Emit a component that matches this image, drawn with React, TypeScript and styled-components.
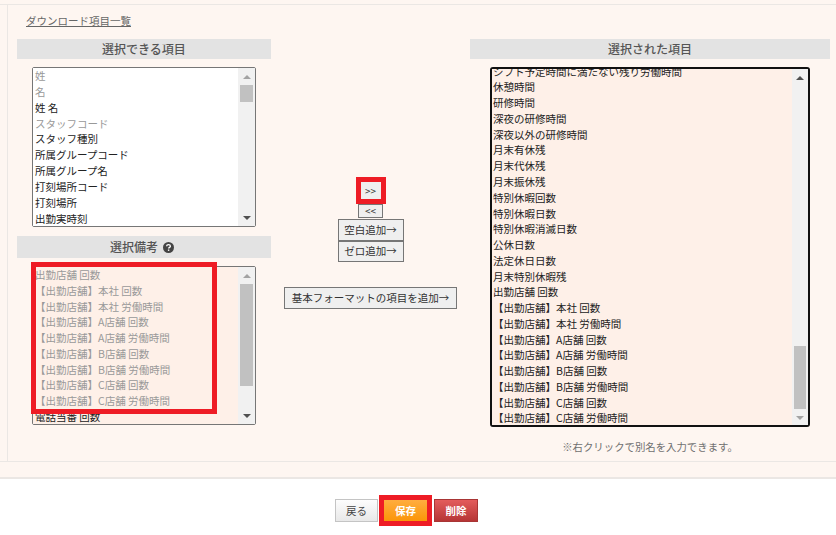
import React from "react";
import styled, { createGlobalStyle } from "styled-components";

const Global = createGlobalStyle`
  html, body { margin: 0; padding: 0; background: #fff; }
  body { font-family: "Noto Sans CJK JP", "Liberation Sans", sans-serif; width: 836px; height: 535px; overflow: hidden; }
`;

const Page = styled.div`
  width: 836px;
  height: 535px;
  display: flex;
  flex-direction: column;
`;
const Peach = styled.div`
  height: 479px;
  box-sizing: border-box;
  padding-top: 4px;
  background: #fef6f1;
  border-bottom: 2px solid #ebe7e4;
`;
const Panel = styled.section`
  height: 458px;
  box-sizing: border-box;
  border-top: 1px solid #ebe7e4;
  border-bottom: 1px solid #ebe7e4;
`;
const PanelInner = styled.div`
  height: 100%;
  box-sizing: border-box;
  margin-left: 7px;
  border-left: 1px solid #ebe7e4;
  padding: 7px 6px 0 9px;
`;
const TopLink = styled.a`
  display: block;
  margin-left: 9px;
  height: 18px;
  line-height: 18px;
  font-size: 10.5px;
  color: #666;
  text-decoration: underline;
`;
const Columns = styled.div`
  display: flex;
  margin-top: 9px;
`;
const LeftCol = styled.div`
  width: 254px;
  display: flex;
  flex-direction: column;
`;
const CenterCol = styled.div`
  width: 199px;
  display: flex;
  flex-direction: column;
  align-items: center;
  padding-top: 143px;
`;
const RightCol = styled.div`
  width: 360px;
  display: flex;
  flex-direction: column;
  align-items: center;
`;
const Heading = styled.h3<{ $h: number; $top?: number }>`
  margin: ${(p) => p.$top ?? 0}px 0 0;
  width: 100%;
  height: ${(p) => p.$h}px;
  line-height: ${(p) => p.$h}px;
  background: #e3e3e3;
  color: #555;
  font-size: 12px;
  font-weight: 500;
  text-align: center;
  display: flex;
  align-items: center;
  justify-content: center;
  gap: 5px;
`;
const ListWrap = styled.div<{ $top: number; $w: number; $h: number; $strong?: boolean }>`
  position: relative;
  box-sizing: border-box;
  margin-top: ${(p) => p.$top}px;
  align-self: center;
  width: ${(p) => p.$w}px;
  height: ${(p) => p.$h}px;
  display: flex;
  background: #fff;
  border: ${(p) => (p.$strong ? "2px solid #111" : "1px solid #767676")};
  border-radius: ${(p) => (p.$strong ? 3 : 2)}px;
`;
const Items = styled.div<{ $peach?: boolean }>`
  flex: 1;
  overflow: hidden;
  background: ${(p) => (p.$peach ? "#fef0e8" : "#fff")};
`;
const ItemsInner = styled.div<{ $shift?: number; $pad: number }>`
  margin-top: ${(p) => p.$shift ?? 0}px;
  padding-left: ${(p) => p.$pad}px;
`;
const Item = styled.div<{ $muted?: boolean; $row: number }>`
  height: ${(p) => p.$row}px;
  line-height: ${(p) => p.$row}px;
  font-size: 10.5px;
  white-space: pre;
  color: ${(p) => (p.$muted ? "#999" : "#222")};
`;
const Track = styled.div<{ $w: number }>`
  width: ${(p) => p.$w}px;
  flex: none;
  background: #f1f1f1;
  display: flex;
  flex-direction: column;
  align-items: center;
`;
const ArrowBox = styled.div`
  height: 17px;
  flex: none;
  display: flex;
  align-items: center;
  justify-content: center;
`;
const ArrowGlyph = styled.svg`
  display: block;
  width: 8px;
  height: 4px;
`;
const ThumbArea = styled.div`
  flex: 1;
  width: 100%;
  box-sizing: border-box;
  padding: 0 2px;
`;
const Thumb = styled.div<{ $top: number; $h: number }>`
  margin-top: ${(p) => p.$top}px;
  height: ${(p) => p.$h}px;
  background: #c1c1c1;
`;
const RedFrame = styled.div`
  position: absolute;
  left: -2px;
  top: -5px;
  width: 186px;
  height: 152px;
  box-sizing: border-box;
  border: 5px solid #ee1c25;
  pointer-events: none;
`;
const Btn = styled.button<{ $w: number; $h: number; $small?: boolean; $gap?: number; $marked?: boolean }>`
  box-sizing: border-box;
  width: ${(p) => p.$w}px;
  height: ${(p) => p.$h}px;
  margin: ${(p) => p.$gap ?? 0}px 0 0;
  padding: 0;
  background: #efefef;
  border: ${(p) => (p.$marked ? "none" : "1px solid #767676")};
  border-radius: 0;
  color: #333;
  font-family: inherit;
  font-size: ${(p) => (p.$small ? 10 : 10.5)}px;
  line-height: 1;
  white-space: nowrap;
  outline: ${(p) => (p.$marked ? "5px solid #ee1c25" : "none")};
`;
const Note = styled.p`
  margin: 13px 0 0;
  height: 14px;
  line-height: 14px;
  font-size: 10.4px;
  color: #707070;
`;
const Footer = styled.footer`
  flex: 1;
  display: flex;
  justify-content: center;
  align-items: flex-start;
  gap: 6px;
  padding: 20px 23px 0 0;
  background: #fff;
`;
const ActionBtn = styled.button<{ $tone: "plain" | "save" | "danger" }>`
  box-sizing: border-box;
  width: ${(p) => (p.$tone === "danger" ? 44 : 43)}px;
  height: ${(p) => (p.$tone === "save" ? 21 : 23)}px;
  margin: ${(p) => (p.$tone === "save" ? 1 : 0)}px 0 0 ${(p) => (p.$tone === "danger" ? 1 : 0)}px;
  padding: 0;
  font-family: inherit;
  font-size: 10.5px;
  font-weight: ${(p) => (p.$tone === "plain" ? 400 : 700)};
  color: ${(p) => (p.$tone === "plain" ? "#444" : "#fff")};
  border-radius: 0;
  border: ${(p) =>
    p.$tone === "save"
      ? "none"
      : `1px solid ${p.$tone === "plain" ? "#c4c4c4" : "#a83535"}`};
  background: ${(p) =>
    p.$tone === "plain"
      ? "linear-gradient(#fdfdfd, #e8e8e8)"
      : p.$tone === "save"
      ? "linear-gradient(#ffad3f, #fb9508)"
      : "linear-gradient(#e35c5c, #b63535)"};
  outline: ${(p) => (p.$tone === "save" ? "5px solid #ee1c25" : "none")};
`;
const HelpSvg = styled.svg`
  flex: none;
  margin-right: 4px;
`;

const Up = ({ c = "#a3a3a3" }: { c?: string }) => (
  <ArrowBox>
    <ArrowGlyph viewBox="0 0 8 4">
      <path d="M0 4 L4 0 L8 4 Z" fill={c} />
    </ArrowGlyph>
  </ArrowBox>
);
const Down = ({ c = "#505050" }: { c?: string }) => (
  <ArrowBox>
    <ArrowGlyph viewBox="0 0 8 4">
      <path d="M0 0 L8 0 L4 4 Z" fill={c} />
    </ArrowGlyph>
  </ArrowBox>
);

const HelpIcon = () => (
  <HelpSvg width="11" height="11" viewBox="0 0 11 11">
    <circle cx="5.5" cy="5.5" r="5.5" fill="#444" />
    <path d="M3.6 4.2 C3.7 2.2 7.4 2.2 7.4 4.2 C7.4 5.4 5.6 5.3 5.6 6.6" stroke="#fff" strokeWidth="1.3" fill="none" />
    <rect x="4.9" y="7.5" width="1.4" height="1.4" fill="#fff" />
  </HelpSvg>
);

const first: [string, boolean][] = [
  ["姓", true],
  ["名", true],
  ["姓 名", false],
  ["スタッフコード", true],
  ["スタッフ種別", false],
  ["所属グループコード", false],
  ["所属グループ名", false],
  ["打刻場所コード", false],
  ["打刻場所", false],
  ["出勤実時刻", false],
];

const stores = [
  "【出勤店舗】本社 回数",
  "【出勤店舗】本社 労働時間",
  "【出勤店舗】A店舗 回数",
  "【出勤店舗】A店舗 労働時間",
  "【出勤店舗】B店舗 回数",
  "【出勤店舗】B店舗 労働時間",
  "【出勤店舗】C店舗 回数",
  "【出勤店舗】C店舗 労働時間",
];

const chosen = [
  "シフト予定時間に満たない残り労働時間",
  "休憩時間",
  "研修時間",
  "深夜の研修時間",
  "深夜以外の研修時間",
  "月末有休残",
  "月末代休残",
  "月末振休残",
  "特別休暇回数",
  "特別休暇日数",
  "特別休暇消滅日数",
  "公休日数",
  "法定休日日数",
  "月末特別休暇残",
  "出勤店舗 回数",
  ...stores,
];

export default function App() {
  return (
    <Page>
      <Global />
      <Peach>
        <Panel>
          <PanelInner>
            <TopLink>ダウンロード項目一覧</TopLink>
            <Columns>
              <LeftCol>
                <Heading $h={20}>選択できる項目</Heading>
                <ListWrap $top={8} $w={224} $h={160}>
                  <Items>
                    <ItemsInner $pad={2}>
                      {first.map(([t, m]) => (
                        <Item key={t} $muted={m} $row={15.87}>{t}</Item>
                      ))}
                    </ItemsInner>
                  </Items>
                  <Track $w={17}>
                    <Up />
                    <ThumbArea>
                      <Thumb $top={0} $h={17} />
                    </ThumbArea>
                    <Down />
                  </Track>
                </ListWrap>
                <Heading $h={22} $top={9}>
                  選択備考
                  <HelpIcon />
                </Heading>
                <ListWrap $top={8} $w={224} $h={159}>
                  <Items $peach>
                    <ItemsInner $pad={2}>
                      <Item $muted $row={15.77}>出勤店舗 回数</Item>
                      {stores.map((t) => (
                        <Item key={t} $muted $row={15.77}>{t}</Item>
                      ))}
                      <Item $row={15.77}>電話当番 回数</Item>
                    </ItemsInner>
                  </Items>
                  <Track $w={17}>
                    <Up />
                    <ThumbArea>
                      <Thumb $top={0} $h={102} />
                    </ThumbArea>
                    <Down />
                  </Track>
                  <RedFrame />
                </ListWrap>
              </LeftCol>
              <CenterCol>
                <Btn $w={20} $h={17} $small $marked>&gt;&gt;</Btn>
                <Btn $w={25} $h={14} $small $gap={5}>&lt;&lt;</Btn>
                <Btn $w={66} $h={22} $gap={1}>空白追加→</Btn>
                <Btn $w={66} $h={21}>ゼロ追加→</Btn>
                <Btn $w={173} $h={22} $gap={25}>基本フォーマットの項目を追加→</Btn>
              </CenterCol>
              <RightCol>
                <Heading $h={20}>選択された項目</Heading>
                <ListWrap $top={8} $w={320} $h={360} $strong>
                  <Items $peach>
                    <ItemsInner $shift={-5.4} $pad={1}>
                      {chosen.map((t) => (
                        <Item key={t} $row={15.77}>{t}</Item>
                      ))}
                    </ItemsInner>
                  </Items>
                  <Track $w={16}>
                    <Up c="#505050" />
                    <ThumbArea>
                      <Thumb $top={260} $h={63} />
                    </ThumbArea>
                    <Down c="#a3a3a3" />
                  </Track>
                </ListWrap>
                <Note>※右クリックで別名を入力できます。</Note>
              </RightCol>
            </Columns>
          </PanelInner>
        </Panel>
      </Peach>
      <Footer>
        <ActionBtn $tone="plain">戻る</ActionBtn>
        <ActionBtn $tone="save">保存</ActionBtn>
        <ActionBtn $tone="danger">削除</ActionBtn>
      </Footer>
    </Page>
  );
}
